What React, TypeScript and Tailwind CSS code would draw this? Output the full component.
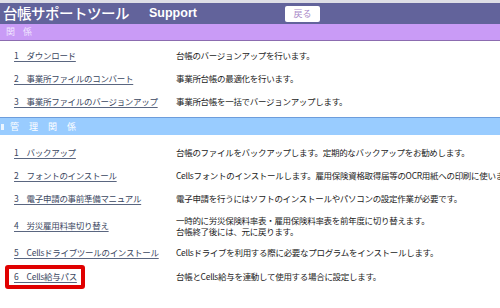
import React from "react";

const jp = { fontFamily: '"Noto Sans CJK JP", "Noto Sans", sans-serif' };

type Row = { n: string; link: string; desc: string[]; h?: string; boxed?: boolean };

const sec1: Row[] = [
  { n: "1", link: "ダウンロード", desc: ["台帳のバージョンアップを行います。"] },
  { n: "2", link: "事業所ファイルのコンバート", desc: ["事業所台帳の最適化を行います。"] },
  { n: "3", link: "事業所ファイルのバージョンアップ", desc: ["事業所台帳を一括でバージョンアップします。"] },
];

const sec2: Row[] = [
  { n: "1", link: "バックアップ", desc: ["台帳のファイルをバックアップします。定期的なバックアップをお勧めします。"] },
  { n: "2", link: "フォントのインストール", desc: ["Cellsフォントのインストールします。雇用保険資格取得届等のOCR用紙への印刷に使います"] },
  { n: "3", link: "電子申請の事前準備マニュアル", desc: ["電子申請を行うにはソフトのインストールやパソコンの設定作業が必要です。"] },
  { n: "4", link: "労災雇用料率切り替え", desc: ["一時的に労災保険料率表・雇用保険料率表を前年度に切り替えます。", "台帳終了後には、元に戻ります。"], h: "h-[31px]" },
  { n: "5", link: "Cellsドライブツールのインストール", desc: ["Cellsドライブを利用する際に必要なプログラムをインストールします。"] },
  { n: "6", link: "Cells給与パス", desc: ["台帳とCells給与を連動して使用する場合に設定します。"], h: "h-[25px]", boxed: true },
];

function RowView({ r }: { r: Row }) {
  return (
    <div className={`flex items-center ${r.h ?? "h-[23px]"}`}>
      <div className="w-[176px] shrink-0 pl-[14px]">
        <span className="relative inline-block">
          <span className="text-[#3a4660] underline underline-offset-[2px] decoration-[#5a6680] whitespace-nowrap tracking-[-0.3px]">
            {r.n + "\u3000" + r.link}
          </span>
          {r.boxed && (
            <span className="absolute left-[-9px] right-[-8px] top-[-5px] bottom-[-6px] border-[4px] border-[#e00000] rounded-[3px]" />
          )}
        </span>
      </div>
      <div className="flex flex-col leading-[11px] text-[#222222] whitespace-nowrap tracking-[-0.3px]">
        {r.desc.map((d, i) => (
          <span key={i}>{d}</span>
        ))}
      </div>
    </div>
  );
}

export default function App() {
  return (
    <div className="w-[500px] h-[308px] overflow-hidden bg-white text-[8.5px]" style={jp}>
      <div className="h-[3px] bg-[#dedee6]" />
      <div className="h-[21px] bg-[#62639b] flex items-center">
        <span className="pl-[3px] text-white text-[14.5px] font-medium leading-none tracking-[-0.5px]">台帳サポートツール</span>
        <span
          className="ml-[20px] text-white text-[12.5px] font-bold leading-none"
          style={{ fontFamily: '"Liberation Sans", Arial, sans-serif' }}
        >
          Support
        </span>
        <span className="ml-[88px] w-[35px] h-[16px] bg-white rounded-[2px] flex items-center justify-center text-[#a888c8] text-[9px] leading-none">
          戻る
        </span>
      </div>
      <div className="h-[17px] bg-[#c99bf6] border-b border-[#8c6cb0] flex items-center pl-[6px] text-[#f0e4ff] text-[9px] tracking-[3px]">
        関 係
      </div>
      <div className="pt-[3px] pb-[4px]">
        {sec1.map((r, i) => (
          <RowView key={i} r={r} />
        ))}
      </div>
      <div className="h-[18px] bg-[#99ccff] border-t border-[#6d9ddc] flex items-center text-white text-[9px] tracking-[4px]">
        <div className="ml-[1px] mr-[6px] w-[3px] h-[6px] bg-white/80" />
        管 理 関 係
      </div>
      <div className="pt-[6px]">
        {sec2.map((r, i) => (
          <RowView key={i} r={r} />
        ))}
      </div>
    </div>
  );
}
